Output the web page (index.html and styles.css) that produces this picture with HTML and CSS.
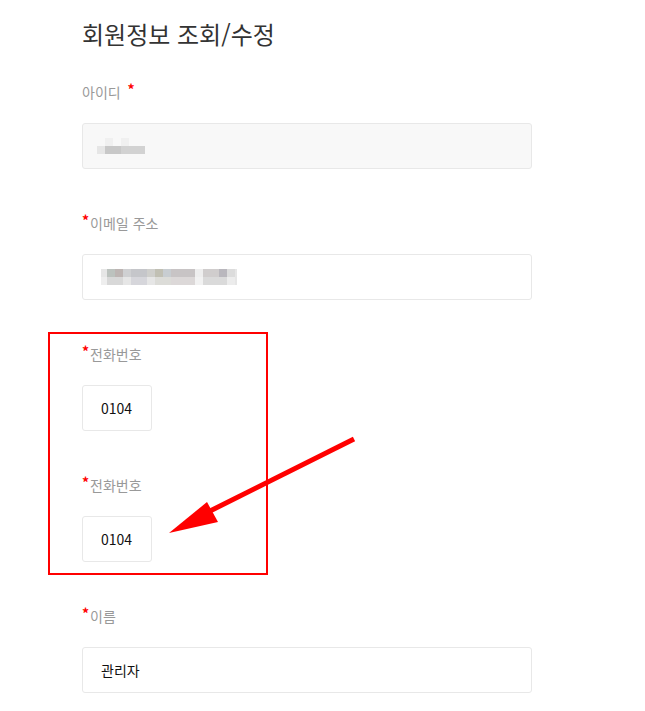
FILE: index.html
```html
<!DOCTYPE html>
<html lang="ko">
<head>
<meta charset="utf-8">
<link rel="stylesheet" href="styles.css">
</head>
<body>
<main class="page">
  <h1 class="title">회원정보 조회/수정</h1>

  <div class="field">
    <label class="label">아이디 <span class="req req-after">*</span></label>
    <div class="input input-readonly">
      <svg class="blur" width="50" height="16" viewBox="0 0 50 16">
        <rect x="8" y="0" width="8" height="8" fill="#f0f0f0"/>
        <rect x="24" y="0" width="8" height="8" fill="#f0f0f0"/>
        <rect x="0" y="8" width="8" height="8" fill="#e6e6e6"/>
        <rect x="8" y="8" width="16" height="8" fill="#c8c8c8"/>
        <rect x="24" y="8" width="24" height="8" fill="#d2d2d2"/>
      </svg>
    </div>
  </div>

  <div class="field">
    <label class="label"><span class="req">*</span>이메일 주소</label>
    <div class="input">
      <svg class="blur" width="136" height="16" viewBox="0 0 136 16">
        <rect x="0" y="0" width="136" height="16" fill="#e6e6e6"/>
        <rect x="6" y="0" width="8" height="8" fill="#bcc2be"/>
        <rect x="14" y="0" width="8" height="8" fill="#bdb5b3"/>
        <rect x="22" y="0" width="8" height="8" fill="#cfd0d2"/>
        <rect x="30" y="0" width="16" height="8" fill="#c5c6ca"/>
        <rect x="46" y="0" width="8" height="8" fill="#cfcfcc"/>
        <rect x="54" y="0" width="8" height="8" fill="#c1c0b4"/>
        <rect x="62" y="0" width="8" height="8" fill="#c8cdd1"/>
        <rect x="70" y="0" width="24" height="8" fill="#c8c4c5"/>
        <rect x="94" y="0" width="8" height="8" fill="#eeeeee"/>
        <rect x="102" y="0" width="16" height="8" fill="#d0cdcd"/>
        <rect x="118" y="0" width="8" height="8" fill="#b9b7bd"/>
        <rect x="126" y="0" width="8" height="8" fill="#dcdcdc"/>
        <rect x="0" y="8" width="6" height="8" fill="#eeeeee"/>
        <rect x="6" y="8" width="16" height="8" fill="#d8d8d8"/>
        <rect x="30" y="8" width="16" height="8" fill="#d6d6db"/>
        <rect x="54" y="8" width="16" height="8" fill="#dcdcd8"/>
        <rect x="70" y="8" width="24" height="8" fill="#dcd8d8"/>
        <rect x="94" y="8" width="8" height="8" fill="#f2f2f2"/>
        <rect x="102" y="8" width="24" height="8" fill="#dadada"/>
        <rect x="126" y="8" width="8" height="8" fill="#ececec"/>
      </svg>
    </div>
  </div>

  <div class="field">
    <label class="label"><span class="req">*</span>전화번호</label>
    <div class="input input-short">0104</div>
  </div>

  <div class="field">
    <label class="label"><span class="req">*</span>전화번호</label>
    <div class="input input-short">0104</div>
  </div>

  <div class="field">
    <label class="label"><span class="req">*</span>이름</label>
    <div class="input">관리자</div>
  </div>

  <svg class="annotation" width="645" height="711" viewBox="0 0 645 711">
    <rect x="49" y="333" width="218" height="241" fill="none" stroke="#ff0000" stroke-width="2"/>
    <line x1="354" y1="439" x2="200" y2="516" stroke="#ff0000" stroke-width="5"/>
    <polygon points="169,533 207,502 218,522" fill="#ff0000"/>
  </svg>
</main>
</body>
</html>
```

FILE: styles.css
```css
html, body {
  margin: 0;
  padding: 0;
  background: #ffffff;
}

body {
  font-family: "Noto Sans CJK KR", "Noto Sans", sans-serif;
  color: #222222;
}

.page {
  position: relative;
  width: 450px;
  padding: 16px 0 0 82px;
  min-height: 695px;
}

.title {
  margin: 0 0 30px;
  font-size: 24px;
  line-height: 36px;
  font-weight: 400;
  color: #333333;
}

.field {
  display: flex;
  flex-direction: column;
  align-items: flex-start;
  margin-bottom: 44px;
}

.label {
  font-size: 14px;
  line-height: 20px;
  height: 20px;
  color: #999999;
  margin-bottom: 21px;
}

.req {
  color: #ff0000;
  font-size: 14px;
  font-weight: 700;
  position: relative;
  top: -3px;
  margin-right: 1px;
}

.req-after {
  margin-left: 3px;
}

.input {
  box-sizing: border-box;
  width: 450px;
  height: 46px;
  border: 1px solid #e8e8e8;
  border-radius: 3px;
  background: #ffffff;
  display: flex;
  align-items: center;
  padding-left: 18px;
  font-size: 14px;
  color: #111111;
}

.input-readonly {
  background: #f8f8f8;
  padding-left: 14px;
}

.input-short {
  width: 70px;
}

.blur {
  display: block;
}

.annotation {
  position: absolute;
  left: 0;
  top: 0;
  pointer-events: none;
}
```
